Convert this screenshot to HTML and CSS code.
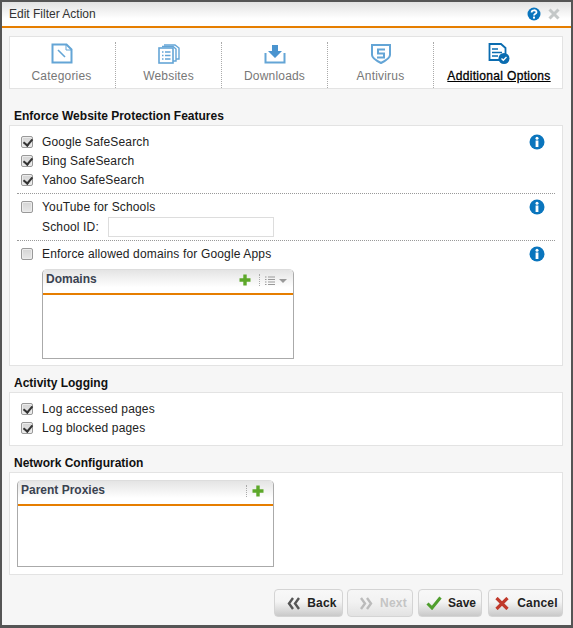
FILE: index.html
```html
<!DOCTYPE html>
<html lang="en">
<head>
    <meta charset="UTF-8">
    <meta name="viewport" content="width=device-width, initial-scale=1.0">
    <title>Edit Filter Action</title>
    <link rel="stylesheet" href="styles.css">
</head>
<body>
    <div class="window">
        <div class="titlebar">
            <span class="title">Edit Filter Action</span>
            <svg class="help" width="14" height="14" viewBox="0 0 14 14"><circle cx="7" cy="7" r="6.5" fill="#0a75bd"/><path d="M4.600 5.400 C4.600 2.600 9.500 2.600 9.500 5.200 C9.500 6.900 7 6.800 7 8.600" fill="none" stroke="#fff" stroke-width="1.800"/><rect x="6" y="9.600" width="2" height="2" fill="#fff"/></svg>
            <svg class="close" width="12" height="12" viewBox="0 0 12 12"><path d="M1.5 1.5 L10.5 10.5 M10.5 1.5 L1.5 10.5" stroke="#c4c8c8" stroke-width="3"/></svg>
        </div>

        <div class="content">
            <div class="tabs">
                <div class="tab first">
                    <svg width="22" height="21" viewBox="0 0 22 21"><path d="M1.5 1.5 H15.5 L20.5 6.5 V19.5 H1.5 Z" fill="#fff" stroke="#64a5d6" stroke-width="2"/><path d="M7 7 L14 14" stroke="#64a5d6" stroke-width="1.6"/><path d="M15 1.5 V7 H20.5" fill="none" stroke="#64a5d6" stroke-width="1"/></svg>
                    <span>Categories</span>
                </div>
                <div class="tab">
                    <svg width="22" height="21" viewBox="0 0 22 21"><path d="M6 2 H17 L21 5 V16 H18" fill="#fff" stroke="#64a5d6" stroke-width="1.4"/><path d="M4 3.5 H15 L18 6 V18 H4" fill="#fff" stroke="#64a5d6" stroke-width="1.4"/><rect x="1" y="5" width="14" height="15" fill="#fff" stroke="#64a5d6" stroke-width="1.6"/><path d="M4 9 H5.5 M7 9 H12.5 M4 12.5 H5.5 M7 12.5 H12.5 M4 16 H5.5 M7 16 H12.5" stroke="#64a5d6" stroke-width="1.6"/></svg>
                    <span>Websites</span>
                </div>
                <div class="tab">
                    <svg width="22" height="21" viewBox="0 0 22 21"><path d="M1.5 10 V19.5 H20.5 V10" fill="none" stroke="#64a5d6" stroke-width="2"/><path d="M8 2 H14 V8 H18 L11 15 L4 8 H8 Z" fill="#4a94cf"/></svg>
                    <span>Downloads</span>
                </div>
                <div class="tab">
                    <svg width="22" height="21" viewBox="0 0 22 21"><path d="M2 2 H20 V12 C20 15 15 18 11 20 C7 18 2 15 2 12 Z" fill="#fff" stroke="#64a5d6" stroke-width="2"/><path d="M15 6.5 H8 V10.5 H14 V14.5 H7" fill="none" stroke="#64a5d6" stroke-width="2"/></svg>
                    <span>Antivirus</span>
                </div>
                <div class="tab active">
                    <svg width="22" height="21" viewBox="0 0 22 21"><path d="M1.5 1 H13 L17.5 5 V17 H1.5 Z" fill="#fff" stroke="#0a6cb0" stroke-width="1.8"/><path d="M4 6 H10 M4 9.5 H14 M4 13 H10" stroke="#0a6cb0" stroke-width="1.6"/><circle cx="16" cy="15.5" r="5.5" fill="#0a6cb0"/><path d="M13.5 15.5 L15.3 17.3 L18.5 14" fill="none" stroke="#fff" stroke-width="1.3"/></svg>
                    <span>Additional Options</span>
                </div>
            </div>

            <h3 class="section-title first">Enforce Website Protection Features</h3>
            <div class="panel protection">
                <div class="group">
                    <svg class="info" width="16" height="16" viewBox="0 0 16 16"><use href="#info-icon"/></svg>
                    <label class="row"><span class="check on"></span>Google SafeSearch</label>
                    <label class="row"><span class="check on"></span>Bing SafeSearch</label>
                    <label class="row"><span class="check on"></span>Yahoo SafeSearch</label>
                </div>
                <div class="group dotted">
                    <svg class="info" width="16" height="16" viewBox="0 0 16 16"><use href="#info-icon"/></svg>
                    <label class="row"><span class="check"></span>YouTube for Schools</label>
                    <div class="school">
                        <label for="school-id">School ID:</label>
                        <input type="text" id="school-id">
                    </div>
                </div>
                <div class="group dotted">
                    <svg class="info" width="16" height="16" viewBox="0 0 16 16"><use href="#info-icon"/></svg>
                    <label class="row"><span class="check"></span>Enforce allowed domains for Google Apps</label>
                    <div class="grid domains">
                        <div class="grid-head">
                            <span class="grid-title">Domains</span>
                            <svg class="plus" width="12" height="12" viewBox="0 0 12 12"><path d="M6 0.5 V11.5 M0.5 6 H11.5" stroke="#5da82a" stroke-width="3.4"/></svg>
                            <span class="grid-sep"></span>
                            <svg class="list" width="10" height="9" viewBox="0 0 10 9"><path d="M0 1 H1.5 M3 1 H10 M0 3.5 H1.5 M3 3.5 H10 M0 6 H1.5 M3 6 H10 M0 8.500 H1.500 M3 8.500 H10" stroke="#999" stroke-width="1"/></svg>
                            <span class="caret"></span>
                        </div>
                    </div>
                </div>
            </div>

            <h3 class="section-title">Activity Logging</h3>
            <div class="panel logging">
                <label class="row"><span class="check on"></span>Log accessed pages</label>
                <label class="row"><span class="check on"></span>Log blocked pages</label>
            </div>

            <h3 class="section-title">Network Configuration</h3>
            <div class="panel network">
                <div class="grid proxies">
                    <div class="grid-head">
                        <span class="grid-title">Parent Proxies</span>
                        <span class="grid-sep"></span>
                        <svg class="plus" width="12" height="12" viewBox="0 0 12 12"><path d="M6 0.5 V11.5 M0.5 6 H11.5" stroke="#5da82a" stroke-width="3.4"/></svg>
                    </div>
                </div>
            </div>

            <div class="buttons">
                <button class="btn back">
                    <svg width="14" height="13" viewBox="0 0 14 13"><path d="M6 1 L2 6.500 L6 12 M12 1 L8 6.500 L12 12" fill="none" stroke="#555" stroke-width="2.400"/></svg>Back</button>
                <button class="btn next" disabled>
                    <svg width="14" height="13" viewBox="0 0 14 13"><path d="M2 1 L6 6.500 L2 12 M8 1 L12 6.500 L8 12" fill="none" stroke="#bbb" stroke-width="2.400"/></svg>Next</button>
                <button class="btn save">
                    <svg width="16" height="14" viewBox="0 0 16 14"><path d="M1.500 7.500 L6 12 L14.500 1.500" fill="none" stroke="#4f9e2d" stroke-width="3"/></svg>Save</button>
                <button class="btn cancel">
                    <svg width="14" height="13" viewBox="0 0 14 13"><path d="M1.500 1 L12.500 12 M12.500 1 L1.500 12" stroke="#c0392b" stroke-width="3.200"/></svg>Cancel</button>
            </div>
        </div>
    </div>

    <svg width="0" height="0" class="defs">
        <symbol id="info-icon" viewBox="0 0 16 16">
            <circle cx="8" cy="8" r="7.500" fill="#0a75bd"/>
            <circle cx="8" cy="4.200" r="1.500" fill="#fff"/>
            <rect x="6.600" y="6.500" width="2.800" height="6.500" fill="#fff"/>
        </symbol>
    </svg>
</body>
</html>
```

FILE: styles.css
```css
* {
    box-sizing: border-box;
}
html, body {
    margin: 0;
    height: 100%;
}
body {
    font-family: "Liberation Sans", Arial, sans-serif;
    font-size: 12px;
    color: #222;
    background: #fff;
}
.defs {
    position: absolute;
}
.window {
    width: 573px;
    height: 628px;
    border-top: 2px solid #555;
    border-left: 2px solid #555;
    border-right: 2px solid #555;
    border-bottom: 3px solid #555;
    background: #f6f6f6;
    overflow: hidden;
}
.titlebar {
    height: 26px;
    display: flex;
    align-items: center;
    padding: 0 10px 0 7px;
    background: linear-gradient(#e2e2e2, #ffffff 70%);
    border-bottom: 2px solid #e67e00;
}
.title {
    flex: 1;
    color: #333;
    font-size: 12px;
}
.help {
    margin-right: 7px;
}
.close {
    margin-right: 1px;
}
.content {
    padding: 8px 8px 0 7px;
}
.tabs {
    display: flex;
    height: 53px;
    background: #fff;
    border: 1px solid #e3e3e3;
    padding: 5px 0 0;
}
.tab {
    width: 106px;
    display: flex;
    flex-direction: column;
    align-items: center;
    border-right: 1px dotted #aaa;
    color: #777;
    font-size: 12px;
    letter-spacing: 0.2px;
    gap: 5px;
}
.tab.first {
    padding-right: 2px;
}
.tab svg {
    display: block;
    height: 21px;
    margin-top: 1px;
}
.tab.active {
    flex: 1;
    border-right: 0;
    padding-left: 2px;
    color: #000;
}
.tab.active span {
    letter-spacing: 0.33px;
    text-decoration: underline;
    -webkit-text-stroke: 0.3px #000;
}
.section-title {
    margin: 0;
    height: 16px;
    padding-left: 5px;
    font-size: 12px;
    font-weight: bold;
    color: #111;
    line-height: 15px;
    margin-top: 10px;
}
.section-title.first {
    margin-top: 20px;
}
.panel {
    background: #fff;
    border: 1px solid #e3e3e3;
}
.protection {
    height: 241px;
    padding: 6px 7px 0 7px;
}
.group {
    position: relative;
    padding-bottom: 4px;
}
.group.dotted {
    border-top: 1px dotted #999;
    padding-top: 3px;
}
.group.dotted + .group.dotted {
    margin-top: -1px;
}
.info {
    position: absolute;
    right: 10px;
    top: 2px;
}
.group.dotted .info {
    top: 5px;
}
.row {
    display: flex;
    align-items: center;
    height: 19px;
    padding-left: 4px;
    color: #222;
    letter-spacing: 0.15px;
}
.check {
    width: 12px;
    height: 12px;
    margin-right: 9px;
    border: 1px solid #999;
    border-radius: 2px;
    background: linear-gradient(#d4d4d4, #e8e8e8);
    box-shadow: inset 0 0 0 1px #ececec;
    position: relative;
}
.check.on::after {
    content: "";
    position: absolute;
    left: 3px;
    top: 0;
    width: 4px;
    height: 7px;
    border-right: 2px solid #333;
    border-bottom: 2px solid #333;
    transform: rotate(40deg);
}
.school {
    display: flex;
    align-items: center;
    height: 21px;
    padding-left: 25px;
    letter-spacing: 0.15px;
}
.school label {
    width: 66px;
}
.school input {
    width: 166px;
    height: 20px;
    border: 1px solid #ddd;
    padding: 0;
    background: #fff;
}
.grid {
    border: 1px solid #aaa;
    border-top-color: #ddd;
    border-radius: 5px 5px 0 0;
    background: #fff;
}
.domains {
    width: 252px;
    height: 90px;
    margin: 6px 0 0 25px;
}
.proxies {
    width: 257px;
    height: 87px;
}
.network {
    height: 103px;
    padding: 7px;
}
.logging {
    height: 54px;
    padding: 6px 7px 0;
}
.grid-head {
    height: 25px;
    display: flex;
    align-items: flex-start;
    padding: 1px 2px 0 3px;
    background: linear-gradient(#e4e4e4, #ffffff 75%);
    border-bottom: 2px solid #e67e00;
    border-radius: 4px 4px 0 0;
}
.grid-title {
    flex: 1;
    font-weight: bold;
    color: #3a4250;
    line-height: 16px;
}
.plus {
    margin: 3px 8px 0 0;
}
.grid-sep {
    height: 12px;
    margin: 3px 5px 0 0;
    border-left: 1px dotted #aaa;
}
.proxies .plus {
    margin-right: 7px;
}
.proxies .grid-sep {
    margin-right: 5px;
}
.list {
    margin: 5px 4px 0 0;
}
.caret {
    margin: 8px 4px 0 0;
    border-left: 4px solid transparent;
    border-right: 4px solid transparent;
    border-top: 4px solid #999;
}
.buttons {
    display: flex;
    justify-content: flex-end;
    gap: 4px;
    margin-top: 14px;
}
.btn {
    height: 28px;
    display: flex;
    align-items: center;
    justify-content: center;
    gap: 6px;
    padding: 0;
    font-family: inherit;
    font-size: 12px;
    font-weight: bold;
    letter-spacing: 0.2px;
    color: #222;
    border: 1px solid #d4d4d4;
    border-radius: 4px;
    background: linear-gradient(#f8f8f8, #f4f4f4 45%, #c9c9c9);
}
.back {
    width: 69px;
    padding-left: 7px;
}
.next {
    width: 66px;
    padding-left: 6px;
    gap: 7px;
    color: #c4c4c4;
    background: linear-gradient(#f6f6f6, #f2f2f2 45%, #e2e2e2);
}
.save {
    width: 64px;
    margin-left: 1px;
    padding-left: 2px;
    letter-spacing: 0;
}
.cancel {
    width: 75px;
    margin-left: 2px;
    padding-left: 2px;
    gap: 8px;
}
```
